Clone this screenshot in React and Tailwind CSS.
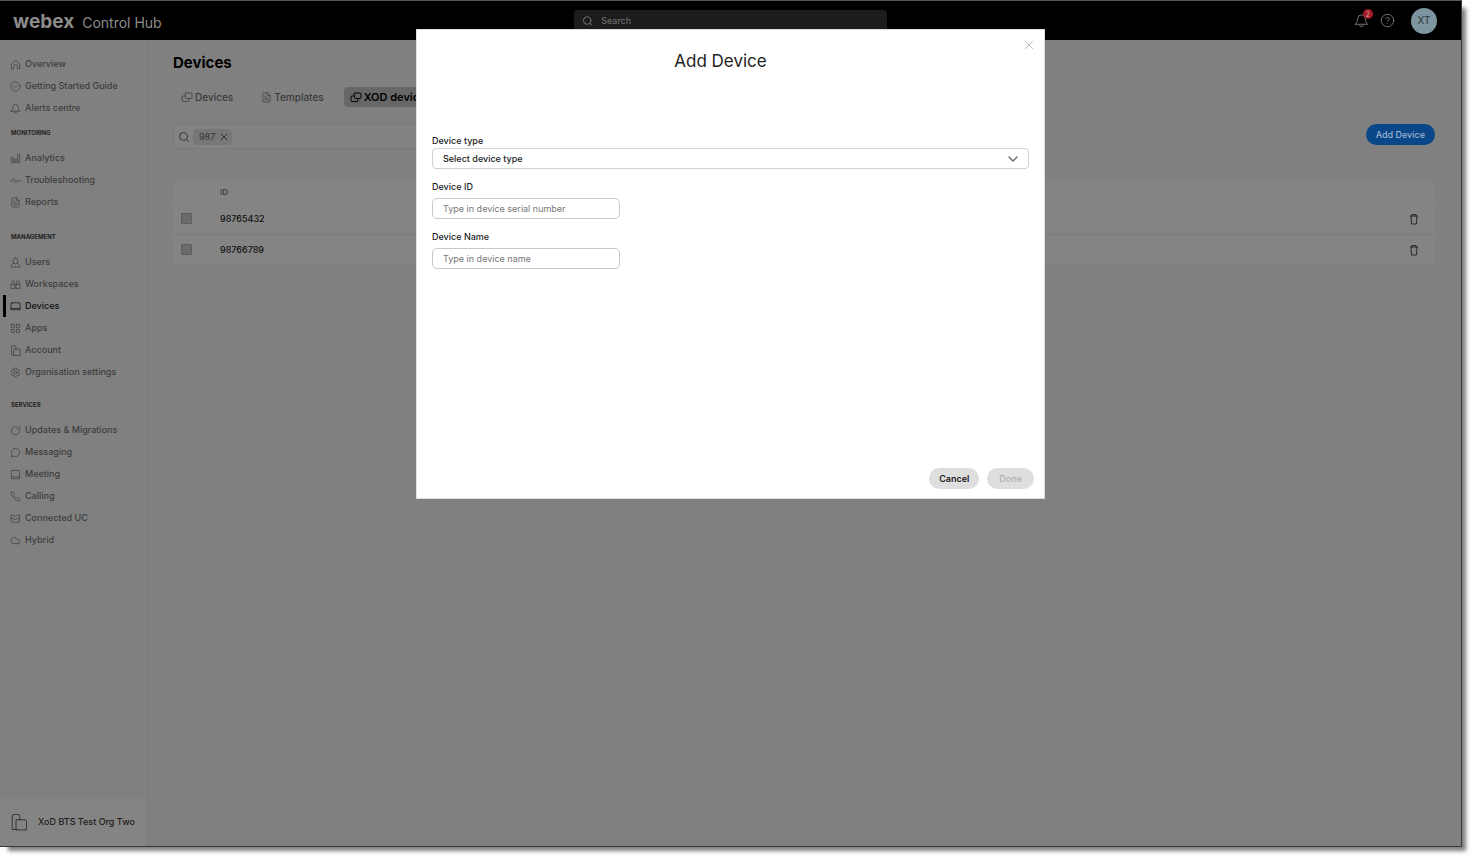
import React, { useState } from 'react'
import { ChevronDown, CircleCheck, CircleHelp, Cloud, FileText, LayoutGrid, Search, Settings, X } from 'lucide-react'

const paths = {
  home: ["M3 21V11l9-8 9 8v10h-5v-5a4 4 0 0 0-8 0v5z"],
  bell: ["M2 18h20c-4-3-3-5-4-9a6 6 0 0 0-12 0c-1 4 0 6-4 9z", "M9 19a3 3 0 0 0 6 0"],
  chart: ["M2 21h20", "M3 10v8h4v-8z", "M10 14v4h4v-4z", "M17 4v14h4V4z"],
  wave: ["M1 13h4l3-5 5 9 4-6 2 2h4"],
  user: ["M12 2a5 5 0 0 0-5 5v3a5 5 0 0 0 10 0V7a5 5 0 0 0-5-5z", "M8 14c-4 1-6 4-6 8h20c0-4-2-7-6-8"],
  workspaces: ["M2 20v-8h9v8z", "M13 20v-8h9v8z", "M4 12V7a3 3 0 0 1 6 0v5", "M14 12V7a3 3 0 0 1 6 0v5"],
  device: ["M4 4h16a2 2 0 0 1 2 2v13H2V6a2 2 0 0 1 2-2z", "M2 16h20"],
  building: ["M9 22H3V4a2 2 0 0 1 2-2h6a2 2 0 0 1 2 2v5", "M8 22V9h12a2 2 0 0 1 2 2v11z"],
  refresh: ["M21 13a9 9 0 1 1-4-8", "M21 3v6h-6"],
  chat: ["M3 21l1-5a9 9 0 1 1 4 4z"],
  meeting: ["M5 3h14a2 2 0 0 1 2 2v16H3V5a2 2 0 0 1 2-2z", "M3 17h18"],
  phone: ["M3 3l3-1 4 6-2 2c1 2 4 5 6 6l2-2 6 4-1 3c-8 3-20-9-18-18z"],
  server: ["M3 4l9 3 9-3v15l-9 2-9-2z", "M3 11l9 3 9-3"],
  windows: ["M16 17v2a2 2 0 0 1-2 2H4a2 2 0 0 1-2-2v-7a2 2 0 0 1 2-2h3", "M9 4h11a2 2 0 0 1 2 2v7a2 2 0 0 1-2 2H11a2 2 0 0 1-2-2z"],
  trash: ["M5 6h14", "M6 6l1 16h10l1-16", "M8 6V3h8v3"],
}

const make = (name) => ({ className, strokeWidth = 2 }) => (
  <svg viewBox="0 0 24 24" fill="none" stroke="currentColor" strokeWidth={strokeWidth} strokeLinejoin="round" strokeLinecap="round" className={className} aria-hidden="true">
    {paths[name].map((d) => <path key={d} d={d} />)}
  </svg>
)

const Building = make('building')
const Trash = make('trash')
const AlertBell = make('bell')
const Windows = make('windows')

const navGroups = [
  {
    spacing: "",
    items: [
      { label: "Overview", icon: make('home') },
      { label: "Getting Started Guide", icon: CircleCheck },
      { label: "Alerts centre", icon: AlertBell },
    ],
  },
  {
    title: "MONITORING",
    spacing: "mt-[9px]",
    items: [
      { label: "Analytics", icon: make('chart') },
      { label: "Troubleshooting", icon: make('wave') },
      { label: "Reports", icon: FileText },
    ],
  },
  {
    title: "MANAGEMENT",
    spacing: "mt-[19px]",
    items: [
      { label: "Users", icon: make('user') },
      { label: "Workspaces", icon: make('workspaces') },
      { label: "Devices", icon: make('device'), active: true },
      { label: "Apps", icon: LayoutGrid },
      { label: "Account", icon: Building },
      { label: "Organisation settings", icon: Settings },
    ],
  },
  {
    title: "SERVICES",
    spacing: "mt-[17px]",
    items: [
      { label: "Updates & Migrations", icon: make('refresh') },
      { label: "Messaging", icon: make('chat') },
      { label: "Meeting", icon: make('meeting') },
      { label: "Calling", icon: make('phone') },
      { label: "Connected UC", icon: make('server') },
      { label: "Hybrid", icon: Cloud },
    ],
  },
]

const devices = ["98765432", "98766789"]

const Header = () => (
  <header className="grid h-10 grid-cols-[1fr_313px_1fr] items-center border-t border-[#555] bg-black px-[13px]">
    <div className="flex items-baseline gap-2 pt-[3px] text-[#8c8c8c]">
      <span className="text-[19px] font-bold leading-6">webex</span>
      <span className="text-sm leading-6">Control Hub</span>
    </div>
    <label className="flex h-[22px] items-center gap-2 rounded bg-[#1c1c1c] px-2 text-[#777]">
      <Search className="size-3" strokeWidth={2} />
      <input type="search" aria-label="Search" placeholder="Search" className="w-full bg-transparent text-[9px] outline-none placeholder:text-[#777]" />
    </label>
    <div className="flex items-center justify-end pr-[11px] text-[#777]">
      <button aria-label="Notifications" className="relative mr-[11px]">
        <AlertBell className="size-[15px]" strokeWidth={1.5} />
        <span className="absolute -right-1 -top-1 flex size-[10px] items-center justify-center rounded-full bg-[#a51c28] text-[7px] leading-none text-[#c9a0a4]">2</span>
      </button>
      <button aria-label="Help" className="mr-4">
        <CircleHelp className="size-[15px]" strokeWidth={1.5} />
      </button>
      <button className="size-[26px] rounded-full bg-[#7c959f] text-[10px] text-[#2c3539]">XT</button>
    </div>
  </header>
)

const Sidebar = () => (
  <aside className="flex w-[148px] shrink-0 flex-col border-r border-[#797979]">
    <nav className="flex-1 pt-[13px]">
      {navGroups.map(({ title, spacing, items }) => (
        <div key={items[0].label} className={spacing}>
          {title && <h2 className="mb-[9px] pl-[11px] text-[6px] font-bold leading-[10px] text-[#222]">{title}</h2>}
          <ul>
            {items.map(({ label, icon: Icon, active }) => (
              <li key={label} className="pl-[3px]">
                <a
                  href="#"
                  className={active
                    ? "flex h-[22px] items-center gap-1 border-l-[3px] border-black pl-1 text-[9px] font-medium text-[#111]"
                    : "flex h-[22px] items-center gap-1 border-l-[3px] border-transparent pl-1 text-[9px] font-medium text-[#3d3d3d]"}
                >
                  <Icon className="size-[11px]" strokeWidth={1.5} />
                  {label}
                </a>
              </li>
            ))}
          </ul>
        </div>
      ))}
    </nav>
    <div className="flex h-12 items-center gap-[10px] bg-[#848484] pl-[10px] text-[9px] font-medium text-[#1c1c1c]">
      <Building className="size-[18px]" strokeWidth={1} />
      XoD BTS Test Org Two
    </div>
  </aside>
)

const DevicesPage = ({ onAdd }) => (
  <main className="flex-1 pl-[25px] pr-[26px] pt-3">
    <h1 className="text-[15px] font-bold leading-[22px] text-black">Devices</h1>

    <div className="mt-[13px] flex h-5 items-stretch text-[10px] font-medium text-[#3a3a3a]">
      <button className="flex items-center gap-[2px] px-2"><Windows className="size-3" strokeWidth={1.5} />Devices</button>
      <button className="ml-3 flex items-center gap-[2px] px-2"><FileText className="size-[11px]" strokeWidth={1.5} />Templates</button>
      <button className="ml-3 flex items-center gap-[2px] rounded-sm bg-[#676767] px-[6px] text-[11px] font-semibold text-black"><Windows className="size-3" />XOD devices</button>
    </div>

    <div className="mt-[17px] flex items-start justify-between">
      <div className="flex h-[25px] w-1/3 items-center border border-[#7a7a7a] bg-[#838383] px-1 text-[#333]">
        <Search className="size-3" strokeWidth={2} />
        <span className="ml-[3px] flex h-4 items-center gap-[3px] rounded-sm bg-[#777] px-[6px] pr-[2px] text-[9px]">
          987
          <button aria-label="Remove filter 987"><X className="size-3" strokeWidth={2} /></button>
        </span>
        <input aria-label="Filter devices" className="ml-1 min-w-0 flex-1 bg-transparent text-[9px] outline-none" />
      </div>
      <button onClick={onAdd} className="h-[21px] rounded-full bg-[#0a4789] px-[10px] text-[9px] font-medium text-[#9db4cc]">Add Device</button>
    </div>

    <table className="mt-8 w-full table-fixed border-collapse bg-[#848484] text-left text-[9px]">
      <thead>
        <tr className="h-[22px] border-b border-[#7f7f7f]">
          <th className="w-[47px]"></th>
          <th className="text-[8px] font-medium text-[#333]">ID</th>
          <th className="w-[43px]"></th>
        </tr>
      </thead>
      <tbody>
        {devices.map((id) => (
          <tr key={id} className="h-[31px] border-b border-[#7c7c7c]">
            <td className="pl-2 align-middle">
              <input type="checkbox" aria-label={`Select device ${id}`} className="block size-[11px] appearance-none rounded-[1px] border border-[#5c5c5c] bg-[#6b6b6b] checked:bg-[#333]" />
            </td>
            <td className="font-medium text-[#111]">{id}</td>
            <td className="pl-4 align-middle">
              <button aria-label={`Delete device ${id}`} className="block text-[#2b2b2b]"><Trash className="size-3" /></button>
            </td>
          </tr>
        ))}
      </tbody>
    </table>
  </main>
)

const AddDeviceDialog = ({ onClose }) => {
  const [type, setType] = useState("");
  const [serial, setSerial] = useState("");
  const [name, setName] = useState("");

  const ready = type && serial && name;

  return (
    <div className="absolute inset-0 flex items-start justify-center pt-[29px]">
      <form
        role="dialog"
        aria-labelledby="dialog-title"
        onSubmit={(e) => e.preventDefault()}
        className="relative flex min-h-[470px] w-[629px] flex-col border border-[#ddd] bg-white px-[15px] pb-[9px] pt-[19px] text-[9px] font-medium text-[#222]"
      >
        <button type="button" aria-label="Close" onClick={onClose} className="absolute right-2 top-2 text-[#b0b0b0]">
          <X className="size-[14px]" strokeWidth={1.5} />
        </button>
        <h2 id="dialog-title" className="mb-[61px] mr-5 text-center text-[17px] font-normal leading-6 text-[#222]">Add Device</h2>

        <label htmlFor="type" className="leading-[14px]">Device type</label>
        <div className="relative">
          <select
            id="type"
            value={type}
            onChange={(e) => setType(e.target.value)}
            className="block h-[21px] w-full appearance-none rounded-[4px] border border-[#d0d0d0] bg-white px-[10px] outline-none"
          >
            <option value="">Select device type</option>
            <option value="room">Room device</option>
            <option value="phone">Phone</option>
          </select>
          <ChevronDown className="pointer-events-none absolute right-2 top-[3px] size-4 text-[#666]" />
        </div>

        <label htmlFor="serial" className="mt-[11px] leading-[14px]">Device ID</label>
        <input
          type="text" id="serial"
          value={serial}
          placeholder="Type in device serial number"
          onChange={(e) => setSerial(e.target.value)}
          className="mt-1 h-[21px] w-[188px] rounded-[5px] border border-[#c8c8c8] px-[10px] font-normal outline-none placeholder:text-[#777]"
        />

        <label htmlFor="name" className="mt-[11px] leading-[14px]">Device Name</label>
        <input
          type="text" id="name"
          value={name}
          placeholder="Type in device name"
          onChange={(e) => setName(e.target.value)}
          className="mt-1 h-[21px] w-[188px] rounded-[5px] border border-[#c8c8c8] px-[10px] font-normal outline-none placeholder:text-[#777]"
        />

        <div className="-mr-[5px] mt-auto flex justify-end gap-2">
          <button type="button" onClick={onClose} className="h-[21px] rounded-full bg-[#dedede] px-[10px] font-semibold">Cancel</button>
          <button disabled={!ready} className="h-[21px] rounded-full bg-[#dedede] px-3 disabled:text-[#b0b0b0]">Done</button>
        </div>
      </form>
    </div>
  )
}

const App = () => {
  const [open, setOpen] = useState(true);

  return (
    <div className="flex min-h-screen bg-white pb-[15px] pr-[15px] font-['Inter',sans-serif]">
      <div className="relative flex min-w-0 flex-1 flex-col border-b border-r border-[#3a3a3a] bg-[#808080] shadow-[6px_6px_4px_-2px_rgba(0,0,0,0.5)]">
        <Header />
        <div className="flex flex-1">
          <Sidebar />
          <DevicesPage onAdd={() => setOpen(true)} />
        </div>
        {open && <AddDeviceDialog onClose={() => setOpen(false)} />}
      </div>
    </div>
  )
}

export default App;
